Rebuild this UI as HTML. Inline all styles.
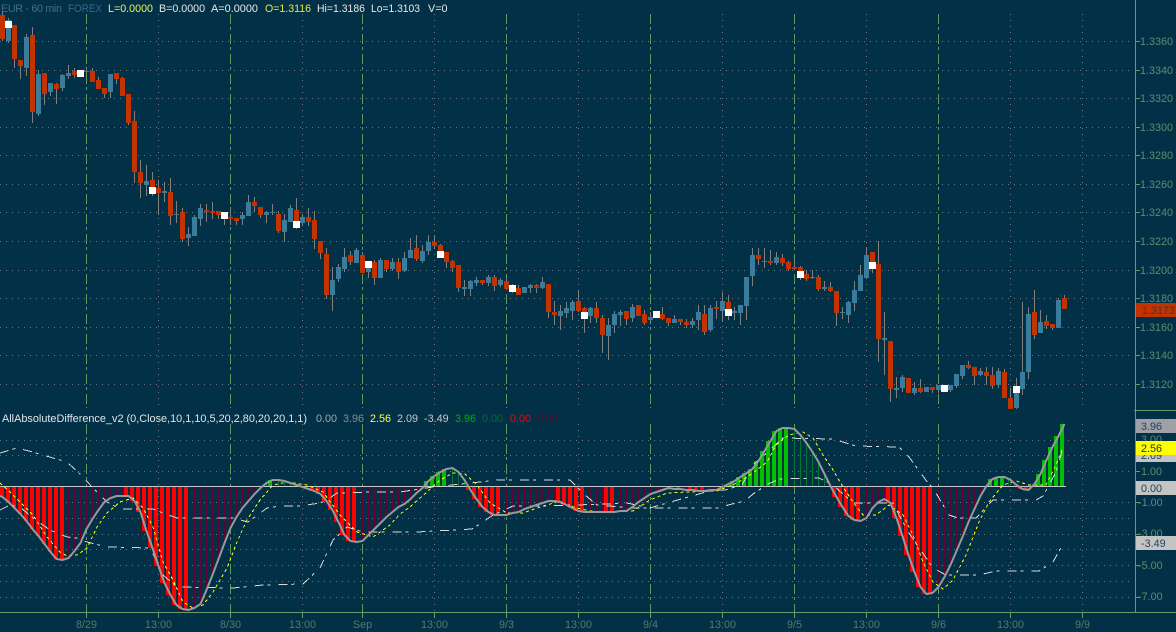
<!DOCTYPE html>
<html><head><meta charset="utf-8"><style>
html,body{margin:0;padding:0;background:#023047;width:1176px;height:632px;overflow:hidden}
svg{display:block}
text{font-family:"Liberation Sans",sans-serif;font-size:10.8px}
.ax{fill:#5f8c6e}
.dt{fill:#4f7f60;text-anchor:middle}
.tg{fill:#1d3f5c}
</style></head><body>
<svg width="1176" height="632" viewBox="0 0 1176 632" xmlns="http://www.w3.org/2000/svg">
<rect width="1176" height="632" fill="#023047"/>
<g fill="none" stroke="#6d7b84" stroke-width="1" stroke-dasharray="1 5" shape-rendering="crispEdges">
<path d="M0 41.5H1131M0 70.5H1131M0 98.5H1131M0 127.5H1131M0 155.5H1131M0 184.5H1131M0 212.5H1131M0 241.5H1131M0 270.5H1131M0 298.5H1131M0 327.5H1131M0 355.5H1131M0 384.5H1131"/>
<path d="M0 440.5H1131M0 455.5H1131M0 471.5H1131M0 502.5H1131M0 518.5H1131M0 534.5H1131M0 549.5H1131M0 565.5H1131M0 581.5H1131M0 597.5H1131"/>
<path stroke-dasharray="1 5" d="M158.5 14V408M302.5 14V408M434.5 14V408M578.5 14V408M722.5 14V408M866.5 14V408M1010.5 14V408M1082.5 14V408M158.5 424V612M302.5 424V612M434.5 424V612M578.5 424V612M722.5 424V612M866.5 424V612M1010.5 424V612M1082.5 424V612"/>
</g>
<path fill="none" stroke="#62995e" stroke-dasharray="10 3 3 4" shape-rendering="crispEdges" d="M86.5 14V408M230.5 14V408M362.5 14V408M506.5 14V408M650.5 14V408M794.5 14V408M938.5 14V408M86.5 424V612M230.5 424V612M362.5 424V612M506.5 424V612M650.5 424V612M794.5 424V612M938.5 424V612"/>

<!-- wicks -->
<path fill="none" stroke="#808080" stroke-width="1" shape-rendering="crispEdges" d="M2.5 12V41M8.5 18V43M14.5 25V68M20.5 60V79M26.5 34V76M32.5 27V123M38.5 70V116M44.5 73V105M50.5 83V96M56.5 83V104M62.5 74V91M68.5 65V79M74.5 68V78M80.5 70V77M86.5 70V74M92.5 68V82M98.5 77V89M104.5 88V98M110.5 74V98M116.5 73V84M122.5 77V96M128.5 94V125M134.5 111V183M140.5 160V198M146.5 165V196M152.5 172V196M158.5 180V215M164.5 182V202M170.5 178V225M176.5 201V223M182.5 208V242M188.5 227V246M194.5 215V236M200.5 204V226M206.5 204V222M212.5 202V219M218.5 211V219M224.5 212V225M230.5 210V225M236.5 218V225M242.5 212V225M248.5 195V216M254.5 197V212M260.5 207V218M266.5 211V223M272.5 204V215M278.5 211V233M284.5 214V242M290.5 205V222M296.5 198V229M302.5 214V226M308.5 208V226M314.5 211V249M320.5 241V259M326.5 248V299M332.5 267V311M338.5 264V282M344.5 248V272M350.5 251V265M356.5 248V263M362.5 252V273M368.5 262V278M374.5 260V285M380.5 258V278M386.5 260V272M392.5 258V271M398.5 258V279M404.5 252V272M410.5 238V258M416.5 235V261M422.5 245V263M428.5 235V255M434.5 235V249M440.5 244V258M446.5 252V268M452.5 260V272M458.5 265V292M464.5 280V296M470.5 280V296M476.5 277V286M482.5 280V285M488.5 275V286M494.5 275V291M500.5 278V287M506.5 278V289M512.5 284V293M518.5 285V295M524.5 287V293M530.5 284V293M536.5 284V293M542.5 277V289M548.5 284V318M554.5 301V325M560.5 305V330M566.5 302V318M572.5 300V320M578.5 291V312M584.5 307V333M590.5 307V323M596.5 302V323M602.5 315V353M608.5 318V360M614.5 311V333M620.5 310V326M626.5 311V325M632.5 304V322M638.5 305V316M644.5 310V325M650.5 312V321M656.5 314V316M662.5 307V320M668.5 318V326M674.5 315V323M680.5 319V325M686.5 319V328M692.5 318V328M698.5 305V330M704.5 305V335M710.5 305V332M716.5 301V319M722.5 292V322M728.5 295V320M734.5 307V320M740.5 305V325M746.5 277V320M752.5 248V286M758.5 248V265M764.5 248V268M770.5 250V265M776.5 252V265M782.5 254V266M788.5 261V271M794.5 262V270M800.5 266V280M806.5 270V281M812.5 270V279M818.5 275V291M824.5 281V291M830.5 282V292M836.5 291V326M842.5 307V319M848.5 301V323M854.5 281V311M860.5 265V291M866.5 247V279M872.5 252V273M878.5 241V362M884.5 312V375M890.5 341V402M896.5 377V398M902.5 375V392M908.5 378V393M914.5 382V395M920.5 379V393M926.5 387V392M932.5 387V393M938.5 385V393M944.5 386V391M950.5 385V392M956.5 374V388M962.5 365V379M968.5 361V369M974.5 367V385M980.5 368V376M986.5 367V385M992.5 367V389M998.5 368V388M1004.5 369V398M1010.5 388V409M1016.5 378V409M1022.5 302V395M1028.5 307V379M1034.5 290V339M1040.5 310V333M1046.5 315V329M1052.5 324V330M1058.5 298V328M1064.5 295V309"/>
<!-- red bodies -->
<path fill="none" stroke="#c33300" stroke-width="5" shape-rendering="crispEdges" d="M2.5 15V39M14.5 25V59M20.5 60V66M32.5 35V112M44.5 73V94M56.5 84V89M74.5 71V75M92.5 71V82M98.5 80V89M104.5 88V94M116.5 73V79M122.5 78V96M128.5 94V123M134.5 121V172M140.5 172V183M152.5 180V187M158.5 188V193M170.5 192V216M182.5 212V239M206.5 210V212M212.5 211V213M218.5 211V215M230.5 217V219M236.5 218V221M254.5 202V206M260.5 207V215M278.5 214V231M296.5 210V228M308.5 217V222M314.5 220V239M320.5 241V253M326.5 254V295M350.5 255V262M362.5 255V273M374.5 262V278M386.5 260V269M398.5 262V272M416.5 248V259M434.5 242V246M440.5 245V251M446.5 252V262M452.5 261V268M458.5 265V288M482.5 280V283M494.5 277V286M506.5 281V289M518.5 288V295M536.5 285V288M548.5 284V312M554.5 312V315M578.5 301V311M584.5 308V312M596.5 308V318M602.5 318V335M626.5 311V319M638.5 305V316M644.5 314V323M662.5 314V319M668.5 318V323M680.5 319V322M686.5 322V325M704.5 314V332M716.5 307V309M728.5 302V309M758.5 255V259M770.5 261V263M782.5 258V263M788.5 262V269M794.5 267V269M800.5 267V271M806.5 274V279M818.5 277V289M830.5 287V291M836.5 291V313M872.5 252V262M878.5 264V339M890.5 341V389M908.5 378V393M920.5 388V392M932.5 387V390M968.5 365V368M974.5 367V376M986.5 372V376M992.5 375V386M1004.5 372V398M1010.5 398V409M1034.5 312V335M1046.5 321V326M1052.5 324V328M1064.5 298V309"/>
<!-- blue bodies -->
<path fill="none" stroke="#3a7c9c" stroke-width="5" shape-rendering="crispEdges" d="M8.5 20V41M26.5 37V68M38.5 74V114M50.5 83V92M62.5 75V88M68.5 73V76M80.5 72V74M86.5 71V72M110.5 74V92M146.5 181V185M164.5 191V193M176.5 214V215M188.5 234V238M194.5 217V236M200.5 208V219M224.5 214V216M242.5 215V219M248.5 202V216M266.5 212V215M272.5 212V213M284.5 220V232M290.5 208V222M302.5 217V223M332.5 280V295M338.5 267V279M344.5 257V269M356.5 250V263M368.5 262V272M380.5 260V278M392.5 262V269M404.5 258V271M410.5 250V258M422.5 251V261M428.5 242V251M464.5 287V289M470.5 281V289M476.5 280V283M488.5 277V283M500.5 280V285M512.5 285V290M524.5 287V293M530.5 285V288M542.5 282V288M560.5 311V316M566.5 308V313M572.5 302V311M590.5 308V316M608.5 325V336M614.5 314V325M620.5 312V315M632.5 307V318M650.5 317V320M656.5 314V316M674.5 319V323M692.5 321V325M698.5 312V320M710.5 308V330M722.5 301V311M734.5 311V313M740.5 305V313M746.5 277V306M752.5 255V276M764.5 261V262M776.5 257V263M812.5 277V278M824.5 287V289M842.5 312V313M848.5 302V315M854.5 290V303M860.5 275V291M866.5 255V278M884.5 338V340M896.5 388V390M902.5 377V388M914.5 388V393M926.5 387V392M938.5 385V390M944.5 386V391M950.5 385V390M956.5 374V386M962.5 365V376M980.5 371V375M998.5 371V385M1016.5 392V408M1022.5 372V389M1028.5 314V372M1040.5 322V333M1058.5 300V328"/>
<!-- white squares -->
<path fill="#fff" shape-rendering="crispEdges" d="M5 21h7v7h-7zM77 70h7v7h-7zM149 187h7v7h-7zM221 212h7v7h-7zM293 221h7v7h-7zM365 261h7v7h-7zM437 251h7v7h-7zM509 285h7v7h-7zM581 312h7v7h-7zM653 311h7v7h-7zM725 309h7v7h-7zM797 271h7v7h-7zM869 262h7v7h-7zM941 385h7v7h-7zM1013 386h7v7h-7z"/>

<!-- histogram: thin negative -->
<path fill="none" stroke="#660033" stroke-width="1" shape-rendering="crispEdges" d="M68.5 486V558M74.5 486V551M80.5 486V543M86.5 486V529M92.5 486V519M98.5 486V510M104.5 486V502M110.5 486V498M116.5 486V496M122.5 486V496M194.5 486V608M200.5 486V604M206.5 486V590M212.5 486V575M218.5 486V559M224.5 486V543M230.5 486V528M236.5 486V517M242.5 486V508M248.5 486V501M254.5 486V494M260.5 486V488M302.5 486V487M308.5 486V489M362.5 486V541M368.5 486V535M374.5 486V529M380.5 486V523M386.5 486V517M392.5 486V512M398.5 486V507M404.5 486V504M410.5 486V499M416.5 486V493M422.5 486V488M506.5 486V515M512.5 486V513M518.5 486V512M524.5 486V509M530.5 486V507M536.5 486V505M542.5 486V503M548.5 486V501M554.5 486V501M590.5 486V512M596.5 486V512M602.5 486V512M620.5 486V511M626.5 486V511M632.5 486V507M638.5 486V502M644.5 486V498M650.5 486V494M656.5 486V492M662.5 486V490M668.5 486V488M674.5 486V489M686.5 486V490M710.5 486V490M716.5 486V490M722.5 486V487M866.5 486V518M872.5 486V508M878.5 486V502M884.5 486V499M938.5 486V587M944.5 486V577M950.5 486V565M956.5 486V551M962.5 486V537M968.5 486V522M974.5 486V509M980.5 486V496"/>
<!-- histogram: thick negative -->
<path fill="none" stroke="#ff0000" stroke-width="4" shape-rendering="crispEdges" d="M2 486V497M8 486V502M14 486V508M20 486V514M26 486V521M32 486V529M38 486V536M44 486V544M50 486V552M56 486V559M62 486V560M126 486V496M132 486V501M138 486V512M144 486V531M150 486V548M156 486V566M162 486V583M168 486V595M174 486V605M180 486V609M186 486V610M312 486V491M318 486V494M324 486V501M330 486V510M336 486V522M342 486V535M348 486V541M354 486V542M468 486V490M474 486V499M480 486V507M486 486V512M492 486V515M498 486V515M558 486V502M564 486V505M570 486V508M576 486V511M582 486V512M606 486V512M612 486V512M678 486V489M690 486V490M696 486V491M702 486V491M834 486V497M840 486V507M846 486V516M852 486V520M858 486V521M888 486V503M894 486V518M900 486V536M906 486V555M912 486V572M918 486V587M924 486V594M930 486V593M1020 486V489M1026 486V490"/>
<!-- histogram: positive -->
<path fill="none" stroke="#007a33" stroke-width="1" shape-rendering="crispEdges" d="M266.5 486V483M278.5 486V480M284.5 486V481M290.5 486V483M452.5 486V468M458.5 486V472M464.5 486V480M728.5 486V484M794.5 486V429M800.5 486V435M806.5 486V443M812.5 486V452M818.5 486V462M824.5 486V474M1008.5 486V480M1014.5 486V485M1034.5 486V484"/>
<path fill="none" stroke="#00c000" stroke-width="4" shape-rendering="crispEdges" d="M270 486V480M426 486V481M432 486V476M438 486V472M444 486V469M732 486V481M738 486V477M744 486V473M750 486V469M756 486V461M762 486V451M768 486V441M774 486V431M780 486V428M786 486V428M990 486V479M996 486V477M1002 486V477M1038 486V474M1044 486V460M1050 486V447M1056 486V436M1062 486V424"/>
<!-- zero line -->
<path d="M0 486.5H1066" stroke="#c4c8cc" stroke-width="1" shape-rendering="crispEdges"/>
<!-- envelopes -->
<polyline fill="none" stroke="#d8dadc" stroke-width="1" stroke-dasharray="9 4 3 8" shape-rendering="crispEdges" points="0,453 17,448 33,452 53,458 67,462 83,477 92,487 107,502 120,509 153,509 163,513 177,518 233,518 248,522 267,508 280,506 300,506 320,503 327,500 337,493 370,492 400,492 433,487 480,482 497,480 570,480 585,495 597,505 633,508 657,508 720,508 728,505 745,501 753,494 768,484 780,479 819,478 833,485 853,503 893,503 899,515 909,533 933,568 946,575 979,575 996,571 1039,571 1053,562 1063,544"/>
<polyline fill="none" stroke="#d8dadc" stroke-width="1" stroke-dasharray="9 4 3 8" shape-rendering="crispEdges" points="0,510 10,505 20,507 33,518 50,530 67,537 77,538 87,542 107,547 150,548 157,562 163,575 177,587 233,588 263,585 303,584 320,568 333,540 347,527 363,532 400,532 417,532 472,529 480,524 493,515 513,506 543,506 607,504 627,503 650,508 660,505 713,490 725,490 742,485 753,465 770,450 783,438 833,439 856,446 899,447 909,457 928,483 933,488 949,515 958,518 976,518 993,500 1036,500 1043,496 1056,472 1063,448"/>
<!-- yellow signal -->
<polyline fill="none" stroke="#ffff00" stroke-width="1" stroke-dasharray="3 3" shape-rendering="crispEdges" points="0,483 10,492 20,502 33,515 47,537 60,552 67,556 77,555 87,548 97,527 107,513 120,502 133,498 143,508 153,527 163,562 173,580 183,602 193,608 203,605 213,592 227,568 237,542 247,520 260,500 273,485 287,482 307,485 323,492 340,515 357,532 373,537 390,525 400,514 410,507 427,492 440,480 453,473 465,474 477,485 490,503 507,513 523,513 540,507 557,502 577,508 590,511 607,512 633,511 650,500 667,493 687,492 717,491 737,483 753,473 767,462 776,445 789,435 803,432 813,438 823,455 833,470 843,487 853,502 863,515 876,515 889,505 903,515 913,535 923,562 933,582 943,589 953,580 966,555 979,522 989,502 1003,485 1016,481 1029,485 1046,485 1056,465 1063,447"/>
<!-- main curve -->
<polyline fill="none" stroke="#999999" stroke-width="2" points="0,496 2.5,497 8.5,502 14.5,508 20.5,514 26.5,521 32.5,529 38.5,536 44.5,544 50.5,552 56.5,559 62.5,560 68.5,558 74.5,551 80.5,543 86.5,529 92.5,519 98.5,510 104.5,502 110.5,498 116.5,496 122.5,496 128.5,496 134.5,501 140.5,512 146.5,531 152.5,548 158.5,566 164.5,583 170.5,595 176.5,605 182.5,609 188.5,610 194.5,608 200.5,604 206.5,590 212.5,575 218.5,559 224.5,543 230.5,528 236.5,517 242.5,508 248.5,501 254.5,494 260.5,488 266.5,483 272.5,480 278.5,480 284.5,481 290.5,483 296.5,485 302.5,487 308.5,489 314.5,491 320.5,494 326.5,501 332.5,510 338.5,522 344.5,535 350.5,541 356.5,542 362.5,541 368.5,535 374.5,529 380.5,523 386.5,517 392.5,512 398.5,507 404.5,504 410.5,499 416.5,493 422.5,488 428.5,481 434.5,476 440.5,472 446.5,469 452.5,468 458.5,472 464.5,480 470.5,490 476.5,499 482.5,507 488.5,512 494.5,515 500.5,515 506.5,515 512.5,513 518.5,512 524.5,509 530.5,507 536.5,505 542.5,503 548.5,501 554.5,501 560.5,502 566.5,505 572.5,508 578.5,511 584.5,512 590.5,512 596.5,512 602.5,512 608.5,512 614.5,512 620.5,511 626.5,511 632.5,507 638.5,502 644.5,498 650.5,494 656.5,492 662.5,490 668.5,488 674.5,489 680.5,489 686.5,490 692.5,490 698.5,491 704.5,491 710.5,490 716.5,490 722.5,487 728.5,484 734.5,481 740.5,477 746.5,473 752.5,469 758.5,461 764.5,451 770.5,441 776.5,431 782.5,428 788.5,428 794.5,429 800.5,435 806.5,443 812.5,452 818.5,462 824.5,474 830.5,486 836.5,497 842.5,507 848.5,516 854.5,520 860.5,521 866.5,518 872.5,508 878.5,502 884.5,499 890.5,503 896.5,518 902.5,536 908.5,555 914.5,572 920.5,587 926.5,594 932.5,593 938.5,587 944.5,577 950.5,565 956.5,551 962.5,537 968.5,522 974.5,509 980.5,496 986.5,486 992.5,479 998.5,477 1004.5,477 1010.5,480 1016.5,485 1022.5,489 1028.5,490 1034.5,484 1040.5,474 1046.5,460 1052.5,447 1058.5,436 1064.5,424"/>

<!-- axes -->
<g fill="none" stroke="#6a9a6c" stroke-width="1" shape-rendering="crispEdges">
<path d="M1135.5 0V612M0 612.5H1176M1134 410.5H1176"/>
<path d="M1136 41.5h4M1136 70.5h4M1136 98.5h4M1136 127.5h4M1136 155.5h4M1136 184.5h4M1136 212.5h4M1136 241.5h4M1136 270.5h4M1136 298.5h4M1136 327.5h4M1136 355.5h4M1136 384.5h4M1136 471.5h4M1136 502.5h4M1136 534.5h4M1136 565.5h4M1136 597.5h4"/>
<path d="M86.5 612V618M158.5 612V618M230.5 612V618M302.5 612V618M362.5 612V618M434.5 612V618M506.5 612V618M578.5 612V618M650.5 612V618M722.5 612V618M794.5 612V618M866.5 612V618M938.5 612V618M1010.5 612V618M1082.5 612V618"/>
</g>

<!-- price labels -->
<g class="ax">
<text class="ax" x="1140" y="45">1.3360</text>
<text class="ax" x="1140" y="74">1.3340</text>
<text class="ax" x="1140" y="102">1.3320</text>
<text class="ax" x="1140" y="131">1.3300</text>
<text class="ax" x="1140" y="159">1.3280</text>
<text class="ax" x="1140" y="188">1.3260</text>
<text class="ax" x="1140" y="216">1.3240</text>
<text class="ax" x="1140" y="245">1.3220</text>
<text class="ax" x="1140" y="274">1.3200</text>
<text class="ax" x="1140" y="302">1.3180</text>
<text class="ax" x="1140" y="331">1.3160</text>
<text class="ax" x="1140" y="359">1.3140</text>
<text class="ax" x="1140" y="388">1.3120</text>
</g>
<rect x="1136" y="303" width="40" height="14" fill="#c33300" shape-rendering="crispEdges"/>
<text x="1142" y="314" fill="#3a3a3a">1.3173</text>

<!-- indicator tags -->
<text class="ax" x="1141" y="443">3.00</text>
<rect x="1136" y="448" width="40" height="14" fill="#c4c4c4" shape-rendering="crispEdges"/>
<text class="tg" x="1141" y="459">2.09</text>
<rect x="1136" y="419" width="40" height="14" fill="#a0a0a6" shape-rendering="crispEdges"/>
<text class="tg" x="1141" y="430">3.96</text>
<rect x="1136" y="441" width="40" height="14" fill="#ffff00" shape-rendering="crispEdges"/>
<text x="1141" y="452" fill="#1d3040">2.56</text>
<text class="ax" x="1141" y="475">1.00</text>
<rect x="1136" y="481" width="40" height="14" fill="#c4c4c4" shape-rendering="crispEdges"/>
<text class="tg" x="1141" y="492">0.00</text>
<text class="ax" x="1138" y="506">-1.00</text>
<text class="ax" x="1138" y="537">-3.00</text>
<rect x="1136" y="536" width="40" height="14" fill="#c4c4c4" shape-rendering="crispEdges"/>
<text class="tg" x="1141" y="547">-3.49</text>
<text class="ax" x="1138" y="569">-5.00</text>
<text class="ax" x="1138" y="600">-7.00</text>

<!-- date labels -->
<text class="dt" x="86.5" y="628">8/29</text>
<text class="dt" x="158.5" y="628">13:00</text>
<text class="dt" x="230.5" y="628">8/30</text>
<text class="dt" x="302.5" y="628">13:00</text>
<text class="dt" x="362.5" y="628">Sep</text>
<text class="dt" x="434.5" y="628">13:00</text>
<text class="dt" x="506.5" y="628">9/3</text>
<text class="dt" x="578.5" y="628">13:00</text>
<text class="dt" x="650.5" y="628">9/4</text>
<text class="dt" x="722.5" y="628">13:00</text>
<text class="dt" x="794.5" y="628">9/5</text>
<text class="dt" x="866.5" y="628">13:00</text>
<text class="dt" x="938.5" y="628">9/6</text>
<text class="dt" x="1010.5" y="628">13:00</text>
<text class="dt" x="1082.5" y="628">9/9</text>

<!-- header -->
<text x="1" y="12" fill="#3d6e8a" textLength="61" lengthAdjust="spacing">EUR - 60 min</text>
<text x="68" y="12" fill="#34678a" textLength="34" lengthAdjust="spacingAndGlyphs">FOREX</text>
<text x="108" y="12" fill="#e6f56a" textLength="45" lengthAdjust="spacingAndGlyphs">L=0.0000</text>
<text x="159" y="12" fill="#e8e8e8" textLength="46" lengthAdjust="spacingAndGlyphs">B=0.0000</text>
<text x="211" y="12" fill="#e8e8e8" textLength="47" lengthAdjust="spacingAndGlyphs">A=0.0000</text>
<text x="265" y="12" fill="#e6e84a" textLength="46" lengthAdjust="spacingAndGlyphs">O=1.3116</text>
<text x="317" y="12" fill="#e8e8e8" textLength="48" lengthAdjust="spacingAndGlyphs">Hi=1.3186</text>
<text x="371" y="12" fill="#e8e8e8" textLength="49" lengthAdjust="spacingAndGlyphs">Lo=1.3103</text>
<text x="428" y="12" fill="#e8e8e8">V=0</text>

<!-- indicator title -->
<text x="2" y="422" fill="#e0e4e8" textLength="305" lengthAdjust="spacingAndGlyphs">AllAbsoluteDifference_v2 (0,Close,10,1,10,5,20,2,80,20,20,1,1)</text>
<text x="316" y="422" fill="#9aaab8">0.00</text>
<text x="343" y="422" fill="#8c8c90">3.96</text>
<text x="370" y="422" fill="#ffff40">2.56</text>
<text x="397" y="422" fill="#c8c8c8">2.09</text>
<text x="424" y="422" fill="#c8c8c8">-3.49</text>
<text x="455" y="422" fill="#00b000">3.96</text>
<text x="482" y="422" fill="#006a33">0.00</text>
<text x="510" y="422" fill="#ff0000">0.00</text>
<text x="537" y="422" fill="#660033">0.00</text>
</svg>
</body></html>
